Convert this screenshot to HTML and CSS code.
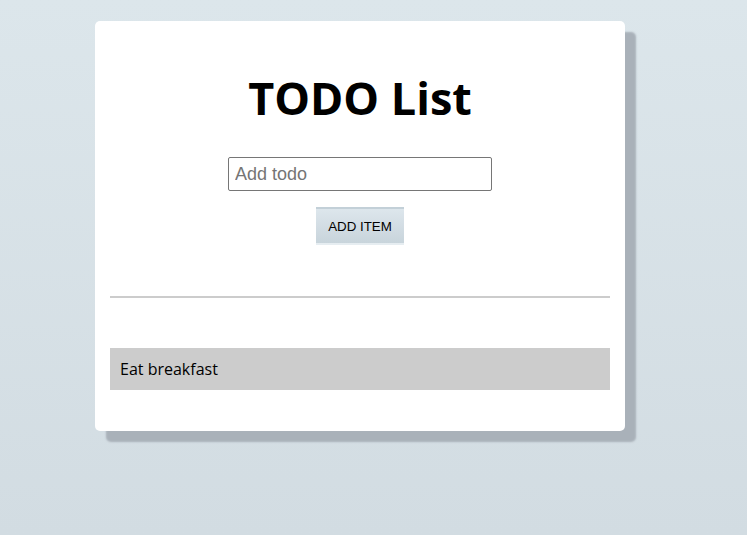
FILE: index.html
```html
<!DOCTYPE html>
<html>
<head>
<meta charset="utf-8">
<link rel="stylesheet" href="styles.css">
</head>
<body>
<main class="card">
  <h1 class="title">TODO List</h1>
  <form class="add-form">
    <input class="todo-input" type="text" placeholder="Add todo">
    <button class="add-btn" type="button">ADD ITEM</button>
  </form>
  <hr class="divider">
  <ul class="todo-list">
    <li class="todo-item">Eat breakfast</li>
  </ul>
</main>
</body>
</html>
```
FILE: styles.css
```css
html {
  height: 100%;
  background: linear-gradient(180deg, #dce6eb 0%, #d2dce2 100%);
}
body {
  margin: 0;
  min-height: 100%;
  font-family: "Open Sans", sans-serif;
  padding: 21px 0 0 95px;
  box-sizing: border-box;
}
.card {
  width: 530px;
  height: 410px;
  box-sizing: border-box;
  background: #fff;
  border-radius: 5px;
  box-shadow: 11px 11px 2px #a9b1b9;
  padding: 15px;
  display: flex;
  flex-direction: column;
}
.title {
  margin: 35px 0 0;
  font-size: 45px;
  font-weight: 700;
  line-height: 54px;
  text-align: center;
  color: #000;
}
.add-form {
  margin-top: 32px;
  display: flex;
  flex-direction: column;
  align-items: center;
  gap: 16px;
}
.todo-input {
  width: 264px;
  height: 34px;
  box-sizing: border-box;
  border: 1px solid #767676;
  border-radius: 2px;
  padding: 0 6px;
  font-family: "Liberation Sans", Arial, sans-serif;
  font-size: 18px;
  color: #000;
}
.todo-input::placeholder {
  color: #757575;
}
.add-btn {
  width: 88px;
  height: 38px;
  border: none;
  border-top: 2px solid #c3d0d8;
  border-bottom: 2px solid #e6edf1;
  background: linear-gradient(180deg, #dde6ec 0%, #c8d4db 100%);
  font-family: "Liberation Sans", Arial, sans-serif;
  font-size: 13.33px;
  color: #000;
  padding: 0;
}
.divider {
  margin: 51px 0 0;
  border: none;
  border-top: 2px solid #cccccc;
}
.todo-list {
  list-style: none;
  margin: 50px 0 0;
  padding: 0;
}
.todo-item {
  height: 42px;
  background: #cccccc;
  padding: 0 10px;
  display: flex;
  align-items: center;
  font-size: 16px;
  color: #000;
}
```
